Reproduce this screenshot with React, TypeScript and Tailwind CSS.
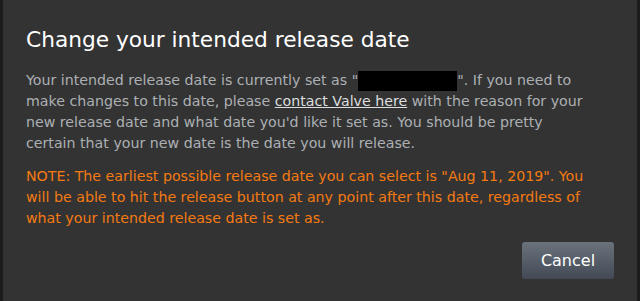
export default function App() {
  return (
    <div className="w-[640px] h-[301px] bg-[#1c1c1c] pl-[3px] pr-[3px] flex" style={{ fontFamily: '"DejaVu Sans", sans-serif' }}>
      <div className="flex-1 bg-[#333333] pl-[23px] pr-[24px] pt-[24px] flex flex-col">
        <h1 className="text-[21.7px] leading-[32px] text-white">Change your intended release date</h1>
        <div className="pr-[23px]">
          <p className="mt-[14px] text-[14.2px] leading-[21px] text-[#acb0b4]">
            Your intended release date is currently set as "<span className="inline-block w-[99px] h-[20px] bg-black align-middle"></span>". If you need to make changes to this date, please <span className="underline text-[#dcdedf]">contact Valve here</span> with the reason for your new release date and what date you'd like it set as. You should be pretty certain that your new date is the date you will release.
          </p>
          <p className="mt-[12px] text-[14.2px] leading-[21px] text-[#f57a12]">
            NOTE: The earliest possible release date you can select is "Aug 11, 2019". You will be able to hit the release button at any point after this date, regardless of what your intended release date is set as.
          </p>
        </div>
        <div className="flex justify-end mt-[13px]">
          <button className="w-[92px] h-[37px] rounded-[3px] bg-gradient-to-b from-[#6a727c] to-[#434a55] text-white text-[16px] mr-[-1px]">Cancel</button>
        </div>
      </div>
    </div>
  );
}
